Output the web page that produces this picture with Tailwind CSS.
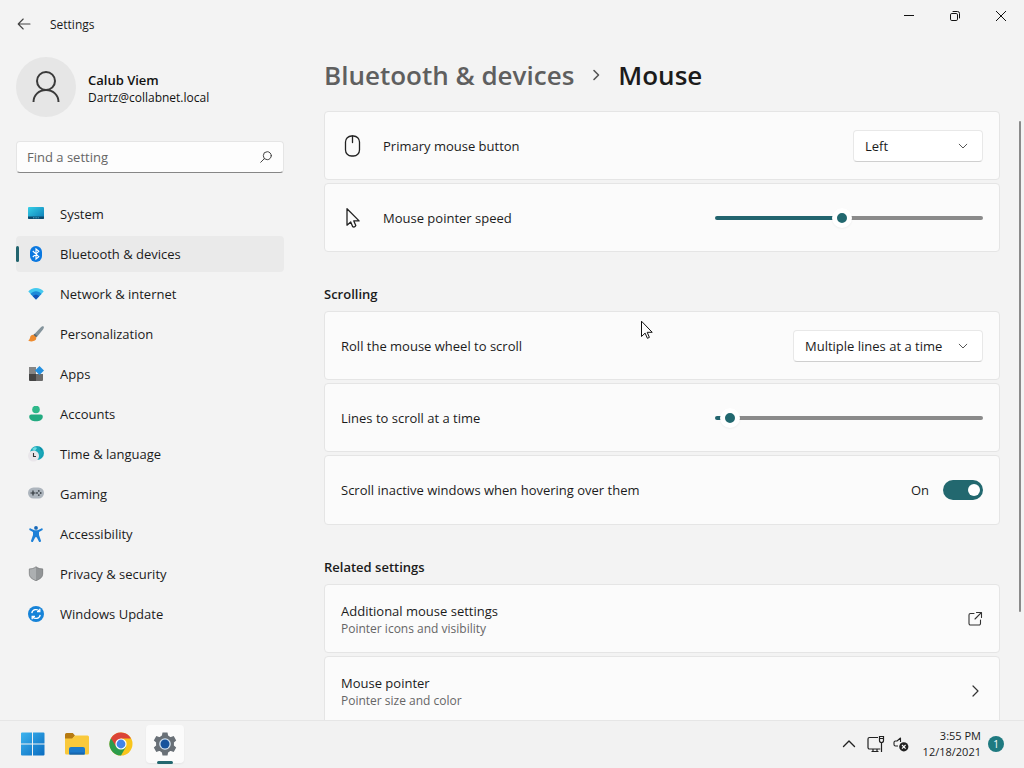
<!DOCTYPE html>
<html lang="en">
<head>
  <meta charset="UTF-8">
  <meta name="viewport" content="width=device-width, initial-scale=1.0">
  <title>Settings - Mouse</title>
  <script src="https://cdn.jsdelivr.net/npm/@tailwindcss/browser@4"></script>
</head>
<body class="relative flex h-screen flex-col overflow-hidden bg-[#f3f3f3] font-['Open_Sans','Noto_Sans',sans-serif] text-[13px] leading-5 text-[#1b1b1b]">

  <!-- Title bar -->
  <header class="flex h-12 shrink-0 items-start justify-between">
    <div class="flex h-12 items-center">
      <button type="button" aria-label="Back" class="flex h-12 w-12 items-center justify-center">
        <svg class="h-4 w-4" viewBox="0 0 16 16" fill="none" stroke="#444" stroke-width="1.1" stroke-linecap="round" stroke-linejoin="round"><path d="M14 8H2.3M7.2 3L2.2 8l5 5"/></svg>
      </button>
      <h1 class="pl-0.5 pt-0.5 text-xs">Settings</h1>
    </div>
    <div class="flex h-8">
      <button type="button" aria-label="Minimize" class="flex w-[46px] items-center justify-center">
        <svg class="h-3 w-3" viewBox="0 0 12 12" fill="none" stroke="#111"><path d="M1 5.5h10"/></svg>
      </button>
      <button type="button" aria-label="Restore" class="flex w-[46px] items-center justify-center">
        <svg class="h-3 w-3" viewBox="0 0 12 12" fill="none" stroke="#111"><rect x="1.5" y="3.5" width="7" height="7" rx="1.3"/><path d="M3.6 1.5h4.9a2 2 0 0 1 2 2v4.9"/></svg>
      </button>
      <button type="button" aria-label="Close" class="flex w-[46px] items-center justify-center">
        <svg class="h-3 w-3" viewBox="0 0 12 12" fill="none" stroke="#111"><path d="M1 1l10 10M11 1L1 11"/></svg>
      </button>
    </div>
  </header>

  <div class="flex min-h-0 flex-1">

    <!-- Sidebar -->
    <aside class="w-[284px] shrink-0 pl-4 pt-[9px]">
      <div class="flex items-center gap-3">
        <div class="flex h-[60px] w-[60px] items-center justify-center rounded-full bg-[#e6e6e6]">
          <svg class="h-8 w-8" viewBox="0 0 32 32" fill="none" stroke="#3a3a3a" stroke-width="2"><circle cx="16" cy="10" r="9"/><path d="M3.5 31c0-7 5.500-12 12.500-12s12.500 5 12.500 12"/></svg>
        </div>
        <div class="pt-0.5">
          <p class="font-semibold leading-5 text-[#111]">Calub Viem</p>
          <p class="text-xs leading-4 text-[#111]">Dartz@collabnet.local</p>
        </div>
      </div>

      <div class="relative mt-6">
        <input type="search" aria-label="Find a setting" placeholder="Find a setting" class="h-8 w-full rounded border border-[#e5e5e5] border-b-[#868686] bg-[#fdfdfd] pl-2.5 pr-9 placeholder:text-[#666]">
        <svg class="absolute right-3 top-2.5 h-3 w-3" viewBox="0 0 12 12" fill="none" stroke="#444" stroke-linecap="round"><circle cx="7.300" cy="4.700" r="4"/><path d="M4.400 7.600L.7 11.300"/></svg>
      </div>

      <nav class="mt-[23px] flex flex-col gap-1">
        <a href="#" class="flex h-9 items-center gap-4 rounded pl-3">
          <svg class="h-4 w-4" viewBox="0 0 16 16"><defs><linearGradient id="sys" x1="0" y1="0" x2="1" y2="1"><stop stop-color="#35d0e8"/><stop offset="1" stop-color="#0b79b4"/></linearGradient></defs><rect y="1" width="16" height="12" rx="1" fill="url(#sys)"/><path d="M0 10.500h16V12a1 1 0 0 1-1 1H1a1 1 0 0 1-1-1z" fill="#0c4a6e"/><path d="M5 11.800h6" stroke="#5fc6e8" stroke-width=".8" stroke-dasharray="1 .6"/></svg>
          System
        </a>
        <a href="#" aria-current="page" class="relative flex h-9 items-center gap-4 rounded bg-[#eaeaea] pl-3">
          <span class="absolute left-0 top-2.5 h-4 w-[3px] rounded-full bg-[#22646e]"></span>
          <svg class="h-4 w-4" viewBox="0 0 16 16"><rect x="2" width="12" height="16" rx="6" fill="#0a78e0"/><path d="M4.800 5l6 5.700L8 13V3l2.800 2.300-6 5.700" fill="none" stroke="#fff" stroke-width="1.100"/></svg>
          Bluetooth &amp; devices
        </a>
        <a href="#" class="flex h-9 items-center gap-4 rounded pl-3">
          <svg class="h-4 w-4" viewBox="0 0 16 16"><path d="M.3 5.600C3.500.8 12.500.8 15.700 5.600L8 13.500z" fill="#44c9ef"/><path d="M2.500 7.900c3-3.700 8-3.700 11 0L8 13.500z" fill="#1d8ad8"/><path d="M4.800 10.200c1.800-2 4.600-2 6.400 0L8 13.500z" fill="#1454b8"/></svg>
          Network &amp; internet
        </a>
        <a href="#" class="flex h-9 items-center gap-4 rounded pl-3">
          <svg class="h-4 w-4" viewBox="0 0 16 16"><path d="M15.600.4c-.9-.7-2 .1-2.700.9L6.200 8.200l2.700 2.700 6.100-7.500c.7-.9 1.400-2.200.6-3z" fill="#84949c"/><path d="M6.600 7.700L5 9.300l2.700 2.500L9.200 10z" fill="#57656d"/><path d="M5.700 8.900c-1.900-.3-3.300.9-3.600 2.600C1.800 13.200 1.100 14 .2 14.500c2.700 1.600 8.700 1.300 8.100-3.300z" fill="#ee8b2f"/></svg>
          Personalization
        </a>
        <a href="#" class="flex h-9 items-center gap-4 rounded pl-3">
          <svg class="h-4 w-4" viewBox="0 0 16 16"><path d="M1 1h7v7H1z" fill="#858585"/><path d="M1 8h7v7H2a1 1 0 0 1-1-1z" fill="#454545"/><path d="M8 8h7v6a1 1 0 0 1-1 1H8z" fill="#6b6b6b"/><path d="M11.500 0L16 4.500 11.500 9 7 4.500z" fill="#2490e0"/></svg>
          Apps
        </a>
        <a href="#" class="flex h-9 items-center gap-4 rounded pl-3">
          <svg class="h-4 w-4" viewBox="0 0 16 16"><circle cx="8" cy="3.500" r="3.800" fill="#2fb88a"/><path d="M1.200 10.500a2 2 0 0 1 2-2h9.600a2 2 0 0 1 2 2c0 3.300-3.400 4.800-6.800 4.800s-6.800-1.500-6.800-4.800z" fill="#22aa80"/></svg>
          Accounts
        </a>
        <a href="#" class="flex h-9 items-center gap-4 rounded pl-3">
          <svg class="h-4 w-4" viewBox="0 0 16 16"><circle cx="9" cy="7" r="7" fill="#1aa7b8"/><path d="M9 0c4 1 3 4 5.500 5 .8 3-1 6-3 7.700A7 7 0 0 0 9 0z" fill="#087b9c"/><path d="M4 3c2-2 4-2 5-1L7 5z" fill="#6fdce2"/><circle cx="5.500" cy="10" r="5.500" fill="#e9e6ea"/><path d="M5.500 7v3.500H8" fill="none" stroke="#333" stroke-width="1.100"/></svg>
          Time &amp; language
        </a>
        <a href="#" class="flex h-9 items-center gap-4 rounded pl-3">
          <svg class="h-4 w-4" viewBox="0 0 16 16"><rect y="1.500" width="16" height="11" rx="5.500" fill="#adb5bd"/><path d="M5 4.500v5M2.500 7h5" stroke="#30363b" stroke-width="1.200"/><g fill="#41484e"><circle cx="9" cy="7" r=".9"/><circle cx="12.700" cy="7" r=".9"/><circle cx="10.800" cy="4.900" r=".9"/><circle cx="10.800" cy="9.100" r=".9"/></g></svg>
          Gaming
        </a>
        <a href="#" class="flex h-9 items-center gap-4 rounded pl-3">
          <svg class="h-4 w-4" viewBox="0 0 16 16"><circle cx="8" cy="1.900" r="1.900" fill="#1668b8"/><path d="M2.600 2.400L6.500 4.200h3l3.900-1.800c1.100-.4 1.900 1.300.8 1.900L11 6v3l2 5.700c.4 1.300-1.600 1.900-2.100.7L8.700 11.200H7.300l-2.200 4.200c-.5 1.200-2.500.6-2.100-.7L5 9V6L1.800 4.300c-1.100-.6-.3-2.300.8-1.900z" fill="#1c80d8"/></svg>
          Accessibility
        </a>
        <a href="#" class="flex h-9 items-center gap-4 rounded pl-3">
          <svg class="h-4 w-4" viewBox="0 0 16 16"><path d="M8 .5c2 1.600 4.500 2.200 7 2.200v4.800c0 3.600-2.500 5.700-7 7.500z" fill="#929597"/><path d="M8 .5C6 2.100 3.500 2.700 1 2.700v4.800C1 11.100 3.500 13.200 8 15z" fill="#acafb1"/><path d="M8 .8C6 2.400 3.600 3 1.300 3v4.500c0 3.400 2.400 5.400 6.700 7.200 4.300-1.800 6.700-3.800 6.700-7.200V3C12.400 3 10 2.400 8 .8z" fill="none" stroke="#7f8183" stroke-width=".7"/></svg>
          Privacy &amp; security
        </a>
        <a href="#" class="flex h-9 items-center gap-4 rounded pl-3">
          <svg class="h-4 w-4" viewBox="0 0 16 16"><circle cx="8" cy="8" r="8" fill="#1683d8"/><g fill="none" stroke="#fff" stroke-width="1.300"><path d="M3.800 7.200a4.300 4.300 0 0 1 7.600-2M12.200 8.800a4.300 4.300 0 0 1-7.600 2"/><path d="M11.800 2.800v2.900H9M4.200 13.200v-2.900H7"/></g></svg>
          Windows Update
        </a>
      </nav>
    </aside>

    <!-- Mouse page -->
    <main class="relative min-w-0 flex-1 overflow-hidden pl-10 pr-6">
      <h2 class="flex h-[63px] items-center gap-4 pb-2.5 text-[26px] font-semibold leading-9">
        <a href="#" class="text-[#5f5f5f]">Bluetooth &amp; devices</a>
        <svg class="h-3 w-3" viewBox="0 0 12 12" fill="none" stroke="#555" stroke-width="1.600" stroke-linecap="round" stroke-linejoin="round"><path d="M4 1.500L8.500 6 4 10.500"/></svg>
        <span>Mouse</span>
      </h2>

      <section class="flex flex-col gap-[3px]">
        <div class="flex h-[69px] items-center rounded border border-[#e5e5e5] bg-[#fbfbfb] px-4">
          <svg class="mr-[18px] h-6 w-6" viewBox="0 0 24 24" fill="none" stroke="#222" stroke-width="1.300" stroke-linecap="round"><rect x="4.500" y="2" width="14" height="20" rx="6"/><path d="M11.500 2v6.500"/></svg>
          <label for="primary" class="flex-1">Primary mouse button</label>
          <div class="relative">
            <select id="primary" class="h-8 w-[130px] appearance-none rounded border border-[#e8e8e8] border-b-[#cfcfcf] bg-white pl-[11px] pr-9">
              <option>Left</option>
              <option>Right</option>
            </select>
            <svg class="pointer-events-none absolute right-[15px] top-[11px] h-2.5 w-2.5" viewBox="0 0 10 10" fill="none" stroke="#555" stroke-linecap="round" stroke-linejoin="round"><path d="M1.200 3.200L5 7l3.800-3.800"/></svg>
          </div>
        </div>
        <div class="flex h-[69px] items-center rounded border border-[#e5e5e5] bg-[#fbfbfb] px-4">
          <svg class="mr-[18px] h-6 w-6" viewBox="0 0 24 24" fill="none" stroke="#222" stroke-width="1.300" stroke-linejoin="round"><path d="M6 2.800v16.400l3.700-3.300 2 4.800 1.200.4c1-.2 1.600-.7 1.900-1.500l-2-4.700h5.300z"/></svg>
          <label for="speed" class="flex-1">Mouse pointer speed</label>
          <input id="speed" type="range" min="1" max="20" value="10" class="h-5 w-[268px] appearance-none bg-transparent [&::-webkit-slider-runnable-track]:h-1 [&::-webkit-slider-runnable-track]:rounded-full [&::-webkit-slider-runnable-track]:bg-[linear-gradient(to_right,#22646e_47%,#8a8a8a_47%)] [&::-webkit-slider-thumb]:-mt-2 [&::-webkit-slider-thumb]:h-5 [&::-webkit-slider-thumb]:w-5 [&::-webkit-slider-thumb]:appearance-none [&::-webkit-slider-thumb]:rounded-full [&::-webkit-slider-thumb]:border-5 [&::-webkit-slider-thumb]:border-white [&::-webkit-slider-thumb]:bg-[#22686f] [&::-webkit-slider-thumb]:shadow-xs">
        </div>
      </section>

      <h3 class="mb-[7px] mt-8 font-semibold leading-5">Scrolling</h3>
      <section class="flex flex-col gap-[3px]">
        <div class="flex h-[69px] items-center rounded border border-[#e5e5e5] bg-[#fbfbfb] px-4">
          <label for="wheel" class="flex-1">Roll the mouse wheel to scroll</label>
          <div class="relative">
            <select id="wheel" class="h-8 w-[190px] appearance-none rounded border border-[#e8e8e8] border-b-[#cfcfcf] bg-white pl-[11px] pr-9">
              <option>Multiple lines at a time</option>
              <option>One screen at a time</option>
            </select>
            <svg class="pointer-events-none absolute right-[15px] top-[11px] h-2.5 w-2.5" viewBox="0 0 10 10" fill="none" stroke="#555" stroke-linecap="round" stroke-linejoin="round"><path d="M1.200 3.200L5 7l3.800-3.800"/></svg>
          </div>
        </div>
        <div class="flex h-[69px] items-center rounded border border-[#e5e5e5] bg-[#fbfbfb] px-4">
          <label for="lines" class="flex-1">Lines to scroll at a time</label>
          <input id="lines" type="range" min="1" max="100" value="3" class="h-5 w-[268px] appearance-none bg-transparent [&::-webkit-slider-runnable-track]:h-1 [&::-webkit-slider-runnable-track]:rounded-full [&::-webkit-slider-runnable-track]:bg-[linear-gradient(to_right,#22646e_5%,#8a8a8a_5%)] [&::-webkit-slider-thumb]:-mt-2 [&::-webkit-slider-thumb]:h-5 [&::-webkit-slider-thumb]:w-5 [&::-webkit-slider-thumb]:appearance-none [&::-webkit-slider-thumb]:rounded-full [&::-webkit-slider-thumb]:border-5 [&::-webkit-slider-thumb]:border-white [&::-webkit-slider-thumb]:bg-[#22686f] [&::-webkit-slider-thumb]:shadow-xs">
        </div>
        <div class="flex h-[70px] items-center rounded border border-[#e5e5e5] bg-[#fbfbfb] px-4">
          <label for="inactive" class="flex-1">Scroll inactive windows when hovering over them</label>
          <span class="mr-3.5">On</span>
          <input id="inactive" type="checkbox" role="switch" checked class="flex h-5 w-10 appearance-none items-center justify-start rounded-full bg-[#8a8a8a] px-[3px] before:h-3 before:w-3 before:rounded-full before:bg-white checked:justify-end checked:bg-[#22686f]">
        </div>
      </section>

      <h3 class="mb-[7px] mt-8 font-semibold leading-5">Related settings</h3>
      <section class="flex flex-col gap-[3px]">
        <a href="#" class="flex h-[69px] items-center justify-between rounded border border-[#e5e5e5] bg-[#fbfbfb] px-4">
          <span>
            <span class="block leading-5">Additional mouse settings</span>
            <span class="block text-xs leading-4 text-[#666]">Pointer icons and visibility</span>
          </span>
          <svg class="h-4 w-4" viewBox="0 0 16 16" fill="none" stroke="#333" stroke-width="1.100" stroke-linecap="round" stroke-linejoin="round"><path d="M7 2.500H3.500a1.500 1.500 0 0 0-1.500 1.500v8.500A1.500 1.500 0 0 0 3.500 14H12a1.500 1.500 0 0 0 1.500-1.500V9M9.500 1.500h5v5M14.300 1.700L8 8"/></svg>
        </a>
        <a href="#" class="flex h-[69px] items-center justify-between rounded border border-[#e5e5e5] bg-[#fbfbfb] px-4">
          <span>
            <span class="block leading-5">Mouse pointer</span>
            <span class="block text-xs leading-4 text-[#666]">Pointer size and color</span>
          </span>
          <svg class="h-4 w-4" viewBox="0 0 16 16" fill="none" stroke="#333" stroke-width="1.200" stroke-linecap="round" stroke-linejoin="round"><path d="M6 3l5 5-5 5"/></svg>
        </a>
      </section>

      <div class="absolute right-[3px] top-[73px] h-[491px] w-0.5 rounded-full bg-[#8a8a8a]"></div>
    </main>
  </div>

  <!-- Taskbar -->
  <footer class="z-10 flex h-12 shrink-0 items-center justify-between border-t border-[#e6e6e6] bg-[#f2f2f2] pb-0.5">
    <div class="flex items-center pl-[11px]">
      <button type="button" aria-label="Start" class="flex h-10 w-11 items-center justify-center">
        <svg class="h-6 w-6" viewBox="0 0 24 24"><defs><linearGradient id="win" x1="0" y1="0" x2="1" y2="1"><stop stop-color="#3db4ef"/><stop offset="1" stop-color="#0a6cc0"/></linearGradient></defs><path d="M0 1.500A1 1 0 0 1 1 .5h10v11H0zM12 .5h10.500a1 1 0 0 1 1 1v10H12zM0 12.500h11v11H1a1 1 0 0 1-1-1zM12 12.500h11.500v10a1 1 0 0 1-1 1H12z" fill="url(#win)"/></svg>
      </button>
      <button type="button" aria-label="File Explorer" class="flex h-10 w-11 items-center justify-center">
        <svg class="h-6 w-6" viewBox="0 0 24 24"><path d="M0 2.500A1.500 1.500 0 0 1 1.500 1h6.300L10 3.500 7.500 7H0z" fill="#b67a12"/><path d="M0 6.500h7.200L10 3.500h12.500A1.500 1.500 0 0 1 24 5v16a1.500 1.500 0 0 1-1.500 1.500h-21A1.500 1.500 0 0 1 0 21z" fill="#f9c93c"/><path d="M4 22.500V17a2 2 0 0 1 2-2h12a2 2 0 0 1 2 2v5.500z" fill="#1b7acb"/><path d="M5 21.500h14" stroke="#1666b0" stroke-width="2"/></svg>
      </button>
      <button type="button" aria-label="Chrome" class="flex h-10 w-11 items-center justify-center">
        <svg class="h-6 w-6" viewBox="0 0 24 24"><circle cx="12" cy="12" r="11.500" fill="#f8c51c"/><path d="M12 12L2 6.200A11.500 11.500 0 0 0 12 23.500l5-8.700z" fill="#2c9c4b"/><path d="M2 6.200A11.500 11.500 0 0 1 22 6.500H12L7 14.500z" fill="#db4437"/><circle cx="12" cy="12" r="5.600" fill="#fff"/><circle cx="12" cy="12" r="4.400" fill="#4285e8"/></svg>
      </button>
      <button type="button" aria-label="Settings" class="relative flex h-10 w-11 items-center justify-center">
        <span class="flex h-[38px] w-[38px] items-center justify-center rounded bg-[#fbfbfb] shadow-xs">
          <svg class="h-6 w-6" viewBox="0 0 24 24"><g fill="#697077"><circle cx="12" cy="12" r="9"/><path d="M9.500.5h5l1 5h-7zM9.500 23.500h5l1-5h-7z"/><path d="M9.500.5h5l1 5h-7zM9.500 23.500h5l1-5h-7z" transform="rotate(60 12 12)"/><path d="M9.500.5h5l1 5h-7zM9.500 23.500h5l1-5h-7z" transform="rotate(120 12 12)"/></g><circle cx="12" cy="12" r="5.800" fill="#d3e2f0"/><circle cx="12" cy="12" r="4.500" fill="#17539c"/></svg>
        </span>
        <span class="absolute bottom-0 left-3.5 h-[3px] w-4 rounded-full bg-[#22686f]"></span>
      </button>
    </div>

    <div class="flex items-center pr-5">
      <button type="button" aria-label="Show hidden icons" class="flex h-10 w-7 items-center justify-center">
        <svg class="h-4 w-4" viewBox="0 0 16 16" fill="none" stroke="#222" stroke-width="1.400" stroke-linecap="round" stroke-linejoin="round"><path d="M2.500 10.500L8 5l5.500 5.500"/></svg>
      </button>
      <button type="button" aria-label="Network and sound" class="flex h-10 items-center gap-2 pl-1">
        <svg class="h-[18px] w-[18px]" viewBox="0 0 18 18" fill="none" stroke="#222" stroke-width="1.200"><path d="M11 2.500H2.500A1.500 1.500 0 0 0 1 4v8.500A1.500 1.500 0 0 0 2.500 14h10.800M6 14v2.500M10 14v2.500M4.500 16.500h7"/><path d="M12.500 1.500h4v4a2 2 0 0 1-4 0zM14.500 7.500v9.500M12.500 3.500h4"/></svg>
        <svg class="h-4 w-4" viewBox="0 0 16 16" fill="none" stroke="#222" stroke-width="1.100"><path d="M7.500 6V2L4 5H2.500A1.500 1.500 0 0 0 1 6.500v2A1.500 1.500 0 0 0 2.500 10H5" stroke-linejoin="round"/><circle cx="10.800" cy="10.800" r="4.600" fill="#222" stroke="none"/><path d="M9 9l3.600 3.600M12.600 9L9 12.600" stroke="#fff"/></svg>
      </button>
      <button type="button" class="ml-3.5 flex items-center gap-[7px] text-right text-[11px] leading-4">
        <span>3:55 PM<br>12/18/2021</span>
        <span class="flex h-4 w-4 items-center justify-center rounded-full bg-[#1f7a80] text-[10px] text-white">1</span>
      </button>
    </div>
  </footer>

  <!-- Pointer -->
  <svg class="pointer-events-none absolute left-[641px] top-[320px] h-5 w-3" viewBox="0 0 12 20" fill="#fff" stroke="#111"><path d="M.5 1.200v15.300l3.600-3.400 2.300 5.200 2-.9-2.200-5.100h5z"/></svg>
</body>
</html>
